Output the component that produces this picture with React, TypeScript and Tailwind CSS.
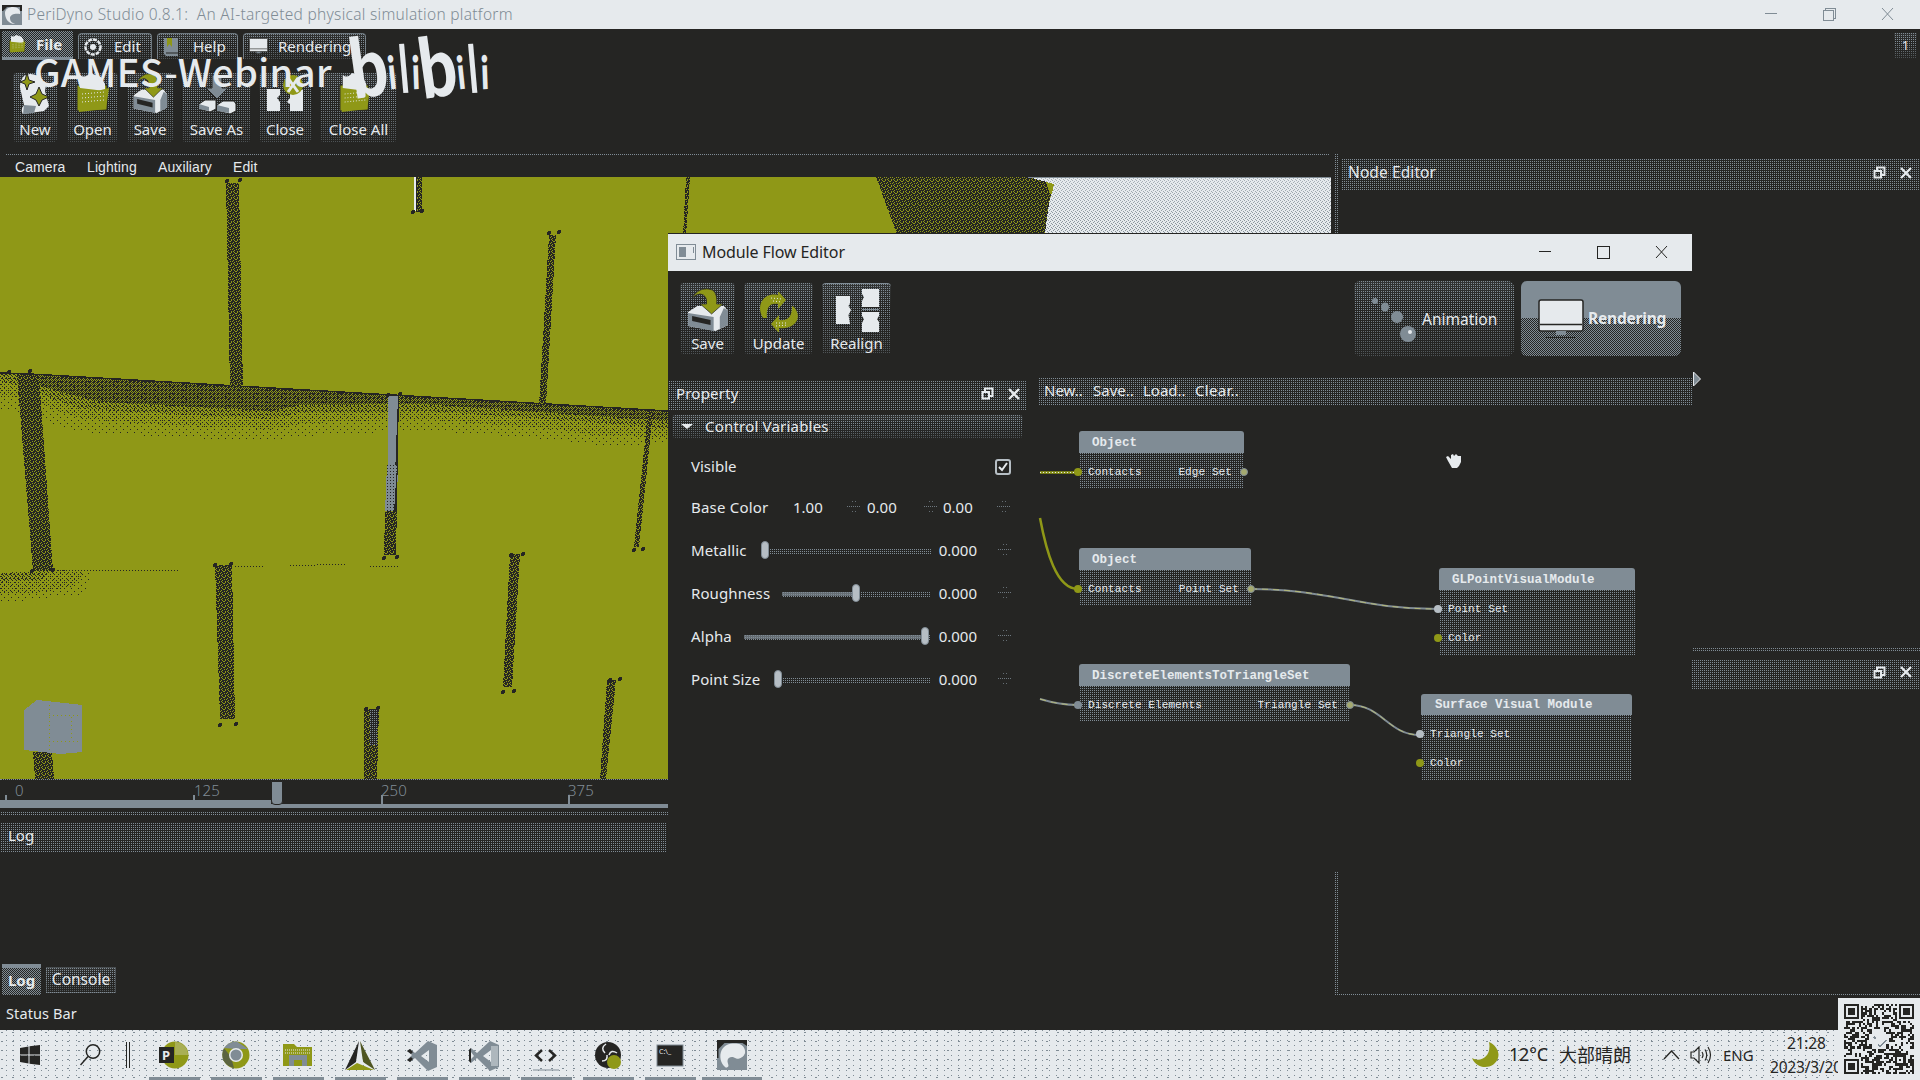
import React from "react";

const DK = "#252523";
const OL = "#8f9817";
const GR = "#808c95";
const WH = "#e6eaed";

const DOTS = "[background:conic-gradient(#808c95_25%,transparent_0)_0_0/2px_2px]";
const CHECKER = "[background:conic-gradient(#808c95_25%,transparent_0_50%,#808c95_0_75%,transparent_0)_0_0/2px_2px]";
const FADE = "[background:linear-gradient(#808c9526,#25252300_35%,#25252390),conic-gradient(#808c95_25%,transparent_0)_0_0/2px_2px]";
const SPECK = "[background:conic-gradient(at_6px_1px,#808c95_25%,transparent_0)_0_0/7px_5px,conic-gradient(at_9px_1px,#808c95_25%,transparent_0)_3px_2px/11px_9px]";

function PeriLogo({ w, h, flip }: { w: number; h: number; flip?: boolean }) {
  return (
    <svg width={w} height={h} viewBox="0 0 20 20" preserveAspectRatio="none">
      <rect width="20" height="20" fill={GR} />
      <path d={flip ? "M0 0H20V4L17 2H5L1 6V12H0Z" : "M0 0H20V6H18V2H5L1 6H0Z"} fill={DK} />
      <path d={flip ? "M6 18.500C2 16 1.500 10 3 7C5 3 9 2 14 2.500C18 3 19.500 7 18.500 10C17 13 13 13 11 11.500C9 11 7 12 7 14C7 16 9 18 6 18.500Z" : "M3 8C3 4 7 2 11 2C16 2 19 5 18 9C14 8 8 9 8 13C8 17 11 18 13 19C6 19 3 13 3 8Z"} fill={WH} />
      {flip && <path d="M8 15C9 12 12 14 15 12.500C18 11 19 9 19 7V19H9Z" fill={GR} />}
    </svg>
  );
}

function Paper() {
  return (
    <svg width="34" height="42" viewBox="0 0 34 42">
      <path d="M6 3Q12-1 20 3L28 12L27 18L31 33L26 38L5 41Q2 37 6 32L3 19Q0 10 6 3Z" fill={WH} />
      <path d="M6 32L18 33L16 40L5 41Z" fill={GR} />
      <path d="M9 0L11 7L17 9L11 11L9 17L7 11L2 9L7 7ZM21 14L24 21L31 24L24 27L21 33L18 27L12 24L18 21Z" fill={OL} stroke={DK} />
    </svg>
  );
}
function Folder({ w = 34, h = 40 }: { w?: number; h?: number }) {
  return (
    <svg width={w} height={h} viewBox="0 0 34 40" preserveAspectRatio="none">
      <path d="M1 38V12H8L11 8H22L24 12H31V37Z" fill={OL} stroke={DK} />
      <path d="M4 15V2Q9 6 14 0L25 4L29 11V18Z" fill={WH} />
      <path d="M3 17L13 20L33 15L30 36L3 39Z" fill={OL} />
      <path d="M6 21L29 19M6 25L29 23M6 29L28 27" fill="none" stroke={WH} strokeDasharray="1 2" />
    </svg>
  );
}
function Disk({ w = 38, h = 44 }: { w?: number; h?: number }) {
  return (
    <svg width={w} height={h} viewBox="0 0 42 44" preserveAspectRatio="none">
      <path d="M2 24L11 18H37L41 23V37L29 43L2 38Z" fill={WH} />
      <path d="M2 25L27 29V43L2 38ZM37 20L41 23V37L33 41V29Z" fill={GR} />
      <path d="M6 28L24 32V37L6 33Z" fill={DK} />
      <path d="M8 7Q15-2 26 2Q31 6 30 16H36L25 26L14 16H20Q21 7 14 6Q10 6 6 10Z" fill={OL} stroke={DK} strokeWidth=".7" />
    </svg>
  );
}
function SaveAs() {
  return (
    <svg width="38" height="42" viewBox="0 0 38 42">
      <path d="M14 2H24V15H30L19 26L8 15H14Z" fill={GR} stroke={DK} />
      <path d="M1 31L7 27H18V36L12 39L1 36ZM19 32L25 28H36L38 31V38L32 41L19 38Z" fill={WH} stroke={DK} />
      <path d="M1 31L11 34V38L1 36ZM19 32L31 35V40L19 38Z" fill={GR} />
    </svg>
  );
}
function Puzzle({ x }: { x?: boolean }) {
  return x ? (
    <svg width="38" height="40" viewBox="0 0 38 40">
      <path d="M1 16H14V22L11 25L14 29V38H1ZM24 17H37V38H24V31L21 29L24 25Z" fill={WH} />
      <circle cx="27" cy="12" r="10" fill={OL} />
      <path d="M22 5L32 19M32 5L22 19" stroke={WH} strokeWidth="3" />
    </svg>
  ) : (
    <svg width="46" height="44" viewBox="0 0 46 44">
      <path d="M2 8H16V15L14.500 18L17 22L14.500 27L16 36H2Z" fill={WH} />
      <path d="M28 1H45V19H28V13L30 9L28 6ZM28 24H45V28L43 31L45 34V44H28V35L30 31L28 28Z" fill={WH} />
      <path d="M28 21.500H45" stroke={GR} />
    </svg>
  );
}
function Refresh() {
  return (
    <svg width="42" height="40" viewBox="0 0 42 40">
      <path d="M5 26C-3 13 6 0 20 3V-1L28 8L20 17V12C11 10 8 17 9 26Z" fill={OL} />
      <path d="M36 15C46 27 35 38 21 36V41L13 32L21 23V28C31 29 34 24 34 14Z" fill={OL} />
      <path d="M13 6L24 7M15 9L24 10M18 31L28 31M18 34L30 33" stroke={WH} strokeDasharray="1 2" strokeWidth="1" />
    </svg>
  );
}
function Monitor({ w, h }: { w: number; h: number }) {
  return (
    <svg width={w} height={h} viewBox="0 0 46 40" preserveAspectRatio="none">
      <rect x="1" y="1" width="44" height="31" rx="2" fill={WH} stroke={DK} strokeWidth="1.5" />
      <path d="M2 25.5H44" stroke={DK} strokeWidth="1.5" />
      <path d="M18 32H28V36H18Z" fill={GR} />
      <path d="M8 38.5H38" stroke={DK} />
    </svg>
  );
}
function Restore() {
  return (
    <svg width="13" height="13" viewBox="0 0 13 13" fill="none" stroke={WH} strokeWidth="2">
      <path d="M4 4V1.5H11.5V9H9" />
      <rect x="1.5" y="5" width="6.5" height="6.5" />
    </svg>
  );
}
function Cross() {
  return (
    <svg width="12" height="12" viewBox="0 0 12 12" stroke={WH} strokeWidth="2.3">
      <path d="M1 1L11 11M11 1L1 11" />
    </svg>
  );
}

function Tab({ icon, label, cls }: { icon: React.ReactNode; label: string; cls: string }) {
  return (
    <div className={`flex h-[26px] shrink-0 items-center overflow-visible rounded-t-sm border border-b-0 border-[#808c95]/80 ${FADE} ${cls}`}>
      {icon}
      <span className="pb-px leading-[20px]">{label}</span>
    </div>
  );
}
function Tool({ icon, label, cls }: { icon: React.ReactNode; label: string; cls: string }) {
  return (
    <div className={`flex shrink-0 flex-col items-center justify-between rounded-sm ${FADE} ${cls}`}>
      {icon}
      <span className="whitespace-nowrap leading-[22px]">{label}</span>
    </div>
  );
}

function Post({ p, light }: { p: string; light?: boolean }) {
  return <polygon points={p} fill={light ? "url(#pl)" : "url(#pd)"} />;
}
function Feet({ x, y, gap = 13 }: { x: number; y: number; gap?: number }) {
  return (
    <g fill={DK}>
      <circle cx={x} cy={y} r="2" />
      <circle cx={x + gap} cy={y - 1} r="2" />
    </g>
  );
}

function Scene() {
  return (
    <svg width="1331" height="602" viewBox="0 177 1331 602" className="block shrink-0" shapeRendering="crispEdges">
      <defs>
        <pattern id="pd" width="6" height="6" patternUnits="userSpaceOnUse">
          <rect width="6" height="6" fill={DK} />
          <path d="M0 0h1v1h-1zM3 0h1v1h-1zM1 1h1v1h-1zM5 2h1v1h-1zM2 3h1v1h-1zM4 3h1v1h-1zM0 4h1v1h-1zM3 5h1v1h-1zM5 5h1v1h-1zM2 1h1v1h-1z" fill={OL} />
        </pattern>
        <pattern id="pl" width="3" height="3" patternUnits="userSpaceOnUse">
          <rect width="3" height="3" fill={GR} />
          <rect width="1" height="1" fill={DK} />
        </pattern>
        <pattern id="pm" width="2" height="2" patternUnits="userSpaceOnUse">
          <rect width="2" height="2" fill={DK} />
          <rect width="1" height="1" fill={GR} />
        </pattern>
        <linearGradient id="skyfade" x1="0" y1="0" x2="0" y2="1">
          <stop offset="0" stopColor={WH} stopOpacity=".4" />
          <stop offset="1" stopColor={WH} stopOpacity="0" />
        </linearGradient>
        <pattern id="sky" width="4" height="4" patternUnits="userSpaceOnUse">
          <rect width="4" height="4" fill={WH} />
          <path d="M0 0h1v1h-1zM2 1h1v1h-1zM1 2h1v1h-1zM3 3h1v1h-1z" fill={GR} />
        </pattern>
        <pattern id="d1" width="2" height="2" patternUnits="userSpaceOnUse">
          <rect width="1" height="1" fill={DK} />
          <rect x="1" y="1" width="1" height="1" fill={DK} />
        </pattern>
        <pattern id="d2" width="4" height="4" patternUnits="userSpaceOnUse">
          <path d="M0 0h1v1h-1zM2 1h1v1h-1zM1 2h1v1h-1zM3 3h1v1h-1z" fill={DK} />
        </pattern>
        <pattern id="d3" width="4" height="4" patternUnits="userSpaceOnUse">
          <rect width="1" height="1" fill={DK} />
          <rect x="2" y="2" width="1" height="1" fill={DK} />
        </pattern>
        <pattern id="d4" width="7" height="6" patternUnits="userSpaceOnUse">
          <path d="M1 0h1v1h-1zM4 3h1v1h-1z" fill={DK} />
        </pattern>
      </defs>
      <rect x="0" y="177" width="1331" height="602" fill={OL} />
      <polygon points="876,177 1030,177 1054,184 1050,205 1044,240 899,240" fill="url(#pd)" />
      <polygon points="1028,177 1331,177 1331,240 1044,240 1049,203 1054,184" fill="url(#sky)" />
      <polygon points="1028,177 1331,177 1331,240 1044,240 1049,203 1054,184" fill="url(#skyfade)" />
      <polygon points="1046,182 1054,184 1052,194 1050,194" fill={OL} />
      <path d="M1028 177.5H1331" stroke={GR} />
      <path d="M0 372L668 411V444L600 446L560 440L420 430L310 436L270 440L180 438L80 432L42 420L10 410L0 410Z" fill="url(#d4)" />
      <path d="M0 372L668 411V437L600 436L560 430L420 419L310 423L270 429L180 426L80 419L30 400L0 396Z" fill="url(#d3)" />
      <path d="M0 372L668 411V429L580 421L420 411L300 413L270 419L150 413L80 409L30 390L0 381Z" fill="url(#d2)" />
      <path d="M15 373L668 411V421L420 404L300 405L270 411L100 402L60 392L30 382Z" fill="url(#d1)" />
      <path d="M0 373L30 374L668 411" stroke={DK} strokeWidth="1.5" fill="none" />
      <path d="M0 573L60 570L92 572L85 594L30 600L0 602Z" fill="url(#d4)" />
      <path d="M0 573L60 570L85 573L70 588L30 594L0 594Z" fill="url(#d3)" />
      <path d="M0 573L50 571L40 580L0 582Z" fill="url(#d2)" />
      <path d="M60 570H180M235 566H265M290 566L345 564M370 566H400" stroke={DK} strokeDasharray="1 2" />
      <Post p="226,183 239,183 243,388 230,388" />
      <rect x="414" y="177" width="2" height="34" fill={WH} />
      <rect x="416" y="177" width="6" height="35" fill="url(#pd)" />
      <path d="M416.500 177V212" stroke={DK} />
      <Post p="549,235 556,235 546,406 539,406" />
      <Post p="17,375 39,375 53,571 33,571" />
      <rect x="388" y="396" width="10" height="86" fill={GR} />
      <polygon points="398,396 399,396 396,555 392,555" fill={DK} />
      <Post light p="387,465 397,465 394,512 385,512" />
      <Post p="385,511 397,511 395,555 384,555" />
      <Post p="648,412 653,412 639,547 634,547" />
      <Post p="215,565 232,565 235,719 220,719" />
      <Post p="510,554 520,554 512,687 503,687" />
      <Post p="364,709 379,709 377,779 364,779" />
      <polygon fill="url(#pm)" points="370,709 378,709 377,745 370,745" />
      <Post p="607,680 616,680 606,779 600,779" />
      <Post p="33,752 52,752 54,779 35,779" />
      <Post p="686,177 690,177 686,236 683,236" />
      <Feet x={227} y={181} />
      <Feet x={549} y={233} gap={10} />
      <Feet x={9} y={372} gap={21} />
      <Feet x={32} y={571} gap={21} />
      <Feet x={388} y={395} gap={12} />
      <Feet x={384} y={558} />
      <Feet x={634} y={550} gap={9} />
      <Feet x={215} y={565} gap={16} />
      <Feet x={220} y={725} gap={16} />
      <Feet x={511} y={555} gap={12} />
      <Feet x={503} y={692} gap={11} />
      <Feet x={366} y={709} gap={12} />
      <Feet x={610} y={680} gap={10} />
      <Feet x={413} y={212} gap={9} />
      <polygon points="24,710 37,700 82,705 82,752 60,754 24,750" fill={GR} />
      <path d="M49 705V752M49 715H80M49 741H80M71 717V740" stroke={OL} strokeDasharray="1 3" fill="none" />
    </svg>
  );
}

function Timeline() {
  const marks = [
    { x: 5, t: "0", tx: 15 },
    { x: 193, t: "125", tx: 194 },
    { x: 381, t: "250", tx: 381 },
    { x: 568, t: "375", tx: 568 },
  ];
  return (
    <div className="relative h-[29px] w-[668px] shrink-0 border-t border-dotted border-[#808c95]">
      {marks.map((m) => (
        <React.Fragment key={m.t}>
          <span className="absolute top-[-1px] text-[15px] font-light leading-[22px] text-[#808c95]" style={{ left: m.tx }}>{m.t}</span>
          <span className="absolute top-[15px] h-[12px] w-[2px] bg-[#808c95]" style={{ left: m.x }} />
        </React.Fragment>
      ))}
      <div className="absolute bottom-0 left-0 h-[4px] w-[668px] bg-[#808c95]" />
      <div className="absolute bottom-0 left-0 h-[8px] w-[271px] bg-[#808c95]" />
      <div className="absolute left-[271px] top-px h-[24px] w-[12px] rounded-b border border-[#252523] bg-[#808c95]" />
    </div>
  );
}

function Spin() {
  return (
    <svg width="14" height="13" viewBox="0 0 14 13" shapeRendering="crispEdges" className="relative bottom-px">
      <path d="M0 6.5H14" stroke={GR} strokeDasharray="1 1" opacity=".8" />
      <path d="M5 1.500H9M5 11.500H9" stroke={GR} strokeDasharray="1 2" opacity=".7" />
    </svg>
  );
}

function SliderRow({ label, left, handle, filled }: { label: string; left: number; handle: number; filled?: boolean }) {
  return (
    <div className="relative flex h-[43px] w-[359px] items-center">
      <span className="ml-[23px] pb-px tracking-[0.1px]">{label}</span>
      <span className={`absolute top-[20px] h-[5px] ${DOTS}`} style={{ left: left - 668, width: 931 - left }} />
      {filled && <span className="absolute top-[20px] h-[4px] bg-[#808c95]/70" style={{ left: left - 668, width: handle - left }} />}
      <span className="absolute top-[12px] h-[18px] w-[8px] rounded-sm border border-[#808c95] bg-[#b6bec4]" style={{ left: handle - 668 }} />
      <span className="ml-auto mr-[21px] pb-px">0.000</span>
      <span className="mr-[15px]"><Spin /></span>
    </div>
  );
}

type Row = { l?: string; lp?: string; r?: string };
function Node({ x, y, w, title, head, rows, pad, tp }: { x: number; y: number; w: number; title: string; head: number; rows: Row[]; pad: number; tp: number }) {
  return (
    <div className="absolute" style={{ left: x - 1038, top: y - 405, width: w }}>
      <div className="rounded-t-[3px] bg-[#808c95] text-[12.5px] font-bold" style={{ height: head, paddingLeft: tp, lineHeight: `${head + 2}px` }}>{title}</div>
      <div className={`pt-[5px] ${DOTS} ${rows.length > 1 ? "pb-[2px]" : "pb-[1px]"}`}>
        {rows.map((r, i) => (
          <div key={i} className="relative flex h-[29px] items-center justify-between text-[11px] tracking-[0.1px]" style={{ paddingLeft: pad, paddingRight: 12 }}>
            {r.l && <span className="absolute left-[-5px] top-[10px] size-[8px] rounded-full" style={{ background: r.lp }} />}
            <span>{r.l}</span>
            {r.r && <span>{r.r}</span>}
            {r.r && <span className="absolute right-[-4px] top-[10px] size-[8px] rounded-full border border-[#808c95] bg-[#a5aa70]" />}
          </div>
        ))}
      </div>
    </div>
  );
}

function Dialog() {
  return (
    <div className="absolute left-[668px] top-[233px] flex h-[639px] w-[1024px] flex-col border-t border-[#252523] bg-[#252523]">
      <div className="flex h-[37px] shrink-0 items-center bg-[#e6eaed] text-[#252523]">
        <svg width="20" height="16" viewBox="0 0 20 16" className="mb-[2px] ml-[8px]"><rect x=".5" y=".5" width="19" height="15" fill={WH} stroke={GR} /><path d="M3 3H10V13H3ZM17 3H18V9H17Z" fill={GR} /></svg>
        <span className="ml-[6px] pb-px text-[16px] tracking-[-0.1px]">Module Flow Editor</span>
        <svg width="130" height="14" viewBox="0 0 130 14" className="mb-[2px] ml-auto mr-[24px]" fill="none" stroke={DK} shapeRendering="crispEdges">
          <path d="M1 6.5H13M59.500 1.500H71V13H59.500Z" /><path d="M118 1L129 13M129 1L118 13" shapeRendering="auto" />
        </svg>
      </div>
      <div className="flex h-[107px] shrink-0 items-start pl-[12px] pt-[12px] text-[15px]">
        <Tool icon={<Disk w={43} h={44} />} label="Save" cls="mr-[9px] h-[71px] w-[55px] pt-[5px]" />
        <Tool icon={<span className="pt-[5px]"><Refresh /></span>} label="Update" cls="mr-[9px] h-[71px] w-[69px] pt-[4px]" />
        <Tool icon={<Puzzle />} label="Realign" cls="h-[71px] w-[69px] border-t border-[#808c95] pt-[4px]" />
        <div className={`ml-auto mr-[7px] mt-[-2px] flex h-[75px] w-[160px] items-center rounded-md pl-[16px] ${FADE}`}>
          <svg width="46" height="46" viewBox="0 0 46 46" fill={GR}><ellipse cx="5" cy="5" rx="3" ry="3" /><ellipse cx="15" cy="11" rx="4" ry="4.500" /><ellipse cx="27" cy="21" rx="6" ry="6" /><ellipse cx="38" cy="38" rx="8" ry="8" /><circle cx="40" cy="36" r="2" fill={WH} /></svg>
          <span className="ml-[6px] pt-[2px] text-[15.5px]">Animation</span>
        </div>
        <div className="mr-[11px] mt-[-2px] flex h-[75px] w-[160px] items-center rounded-md pl-[17px] [background:linear-gradient(#808c95_50%,transparent_0),conic-gradient(#808c95_25%,transparent_0_50%,#808c95_0_75%,transparent_0)_0_0/2px_2px]">
          <Monitor w={46} h={40} />
          <span className="ml-[4px] text-[15.5px] font-bold tracking-[-0.2px]">Rendering</span>
        </div>
      </div>
      <div className="flex grow">
        <div className="w-[359px] shrink-0 pt-[3px] text-[15px]">
          <div className={`flex h-[30px] items-center pb-[5px] ${DOTS}`}>
            <span className="ml-[8px] grow tracking-[0.2px]">Property</span>
            <span className="mr-[14px]"><Restore /></span>
            <span className="mr-[7px]"><Cross /></span>
          </div>
          <div className={`ml-[4px] mt-[4px] flex h-[23px] w-[351px] items-center rounded-sm ${FADE}`}>
            <span className="ml-[9px] border-x-[6px] border-t-[5px] border-x-transparent border-t-[#e6eaed]" />
            <span className="ml-[12px] tracking-[0.2px]">Control Variables</span>
          </div>
          <div className="mt-[8px] flex h-[41px] items-center">
            <span className="ml-[23px] grow">Visible</span>
            <svg width="16" height="16" viewBox="0 0 16 16" className="mr-[16px]" fill="none"><rect x="1" y="1" width="14" height="14" rx="2" stroke="#b6bec4" strokeWidth="2" /><path d="M4 8L7 11L12 4" stroke={WH} strokeWidth="2" /></svg>
          </div>
          <div className="flex h-[42px] items-center pb-[2px]">
            <span className="ml-[23px] w-[102px] tracking-[0.2px]">Base Color</span>
            <span className="w-[54px]">1.00</span><span className="w-[20px]"><Spin /></span>
            <span className="w-[57px]">0.00</span><span className="w-[19px]"><Spin /></span>
            <span className="w-[54px]">0.00</span><Spin />
          </div>
          <SliderRow label="Metallic" left={765} handle={761} />
          <SliderRow label="Roughness" left={782} handle={852} filled />
          <SliderRow label="Alpha" left={744} handle={921} filled />
          <SliderRow label="Point Size" left={778} handle={774} />
        </div>
        <div className="ml-[11px] flex grow flex-col">
          <div className={`flex h-[27px] items-center pb-[2px] pl-[6px] text-[15px] ${DOTS}`}>
            <span className="w-[49px]">New..</span><span className="w-[50px]">Save..</span><span className="w-[52px]">Load..</span><span className="tracking-[0.3px]">Clear..</span>
          </div>
          <div className="relative grow overflow-hidden font-['Liberation_Mono',monospace]">
            <svg width="654" height="460" viewBox="1038 405 654 460" className="block" fill="none" strokeWidth="2">
              <path d="M1040 472.500H1078M1040 518C1046 550 1056 589 1078 589" stroke={OL} strokeWidth="2.500" />
              <path d="M1040 472.500H1078" stroke={WH} strokeWidth="1" strokeDasharray="1 2" />
              <path d="M1251 589C1330 589 1360 609 1438 609M1040 699Q1060 705 1078 705M1350 705C1382 705 1388 735 1420 735" stroke={GR} />
              <path d="M1251 589C1330 589 1360 609 1438 609M1040 699Q1060 705 1078 705M1350 705C1382 705 1388 735 1420 735" stroke="#b5b978" strokeWidth="1" strokeDasharray="6 5" />
              <path d="M1448 461L1446 457L1448 456L1451 459L1451 455L1453 454L1454 456L1456 454L1458 456L1461 456L1461 462L1459 466L1457 468H1452Z" fill={WH} stroke="none" />
            </svg>
            <Node x={1079} y={431} w={165} title="Object" head={22} tp={13} pad={9} rows={[{ l: "Contacts", lp: OL, r: "Edge Set" }]} />
            <Node x={1079} y={548} w={172} title="Object" head={22} tp={13} pad={9} rows={[{ l: "Contacts", lp: OL, r: "Point Set" }]} />
            <Node x={1079} y={664} w={271} title="DiscreteElementsToTriangleSet" head={22} tp={13} pad={9} rows={[{ l: "Discrete Elements", lp: GR, r: "Triangle Set" }]} />
            <Node x={1439} y={568} w={196} title="GLPointVisualModule" head={22} tp={13} pad={9} rows={[{ l: "Point Set", lp: "#b6bec4" }, { l: "Color", lp: OL }]} />
            <Node x={1421} y={694} w={211} title="Surface Visual Module" head={21} tp={14} pad={9} rows={[{ l: "Triangle Set", lp: "#b6bec4" }, { l: "Color", lp: OL }]} />
          </div>
        </div>
      </div>
    </div>
  );
}

const QN = 33;
function qrCell(r: number, c: number): boolean {
  const finder = (a: number, b: number) => {
    const d = Math.max(Math.abs(a - 3), Math.abs(b - 3));
    return d > 4 ? null : d === 3 || d < 2;
  };
  for (const [a, b] of [[r, c], [r, QN - 1 - c], [QN - 1 - r, c]]) {
    const f = finder(a, b);
    if (f !== null) return f;
  }
  if (Math.hypot(r - 16, c - 16) < 5) return false;
  const al = Math.max(Math.abs(r - 26), Math.abs(c - 26));
  if (al <= 2) return al !== 1;
  const h = Math.sin(r * 127.1 + c * 311.7) * 43758.5453;
  return h - Math.floor(h) > 0.48;
}
function QR() {
  const cells: string[] = [];
  for (let r = 0; r < QN; r++) for (let c = 0; c < QN; c++) if (qrCell(r, c)) cells.push(`M${c} ${r}h1v1h-1z`);
  return (
    <div className="absolute bottom-0 right-0 flex h-[82px] w-[82px] items-center justify-center bg-[#e6eaed]">
      <svg width="70" height="70" viewBox="0 0 33 33" shapeRendering="crispEdges">
        <path d={cells.join("")} fill={DK} />
        <path d="M14 15.500L15 16.500M16 19L17 20L20 17" stroke={GR} strokeWidth=".8" fill="none" />
      </svg>
    </div>
  );
}

const APPS: React.ReactNode[] = [
  <g key="p"><circle cx="16" cy="14" r="13.500" fill={OL} /><rect x="0" y="6" width="15" height="16" fill={DK} /><path d="M16 1A13 13 0 0 1 29 14H16Z" fill="#a9af55" /><text x="3" y="19" fontSize="13" fontWeight="700" fill={WH}>P</text></g>,
  <g key="c"><circle cx="15" cy="14" r="13.500" fill={OL} /><path d="M3 7A13.500 13.500 0 0 0 13 27L10 16Z" fill="#5b6440" /><path d="M3 7Q8 0 16 0.500L27 8H15Z" fill={GR} /><circle cx="15" cy="14" r="7" fill={WH} /><circle cx="15" cy="14" r="5.500" fill={GR} /></g>,
  <g key="f"><path d="M0 3H11L14 6H29V25H0Z" fill={OL} /><path d="M2 9H28M2 12H28" stroke={WH} strokeDasharray="1 1" /><path d="M6 25V14H24V25H19V19H11V25Z" fill={GR} /></g>,
  <g key="a"><path d="M14 0L0 29L11 21Z" fill={DK} /><path d="M15 0L30 29L18 21Z" fill="#4f5521" /><path d="M1 29L12 22L29 29Z" fill={OL} /><path d="M14 10L11 21L19 23Z" fill={WH} /></g>,
  <g key="v" fill={GR}><path d="M21 0L30 4V26L21 30L8 17L3 21L0 19L5 14L0 10L3 8L8 12ZM22 9L14 15L22 21Z" fillRule="evenodd" /><path d="M0 10L3 8L6 11L4 13ZM0 19L3 21L6 18L4 16Z" fill={DK} /></g>,
  <g key="w" fill={GR}><path d="M21 0L30 4V26L21 30L8 17L2 22L0 20V9L2 7L8 12ZM22 9L14 15L22 21ZM2 11V18L5 15Z" fillRule="evenodd" /><path d="M0 9L2 7V22L0 20Z" fill={DK} /><path d="M22 5L29 5V25L22 25Z" fill={WH} opacity=".45" /></g>,
  <g key="d" fill="none" stroke={DK} strokeWidth="2.500"><path d="M11 9L5 14.500L11 20M18 9L24 14.500L18 20" /><path d="M2 29H28" stroke={GR} strokeWidth="1" /></g>,
  <g key="o"><circle cx="15" cy="14" r="13" fill={DK} /><path d="M13 3Q7 7 12 12M24 12Q18 8 16 14M9 20Q15 20 14 14" stroke={WH} strokeWidth="1.500" fill="none" /><ellipse cx="21" cy="21" rx="7" ry="7" fill={OL} /></g>,
  <g key="t"><rect x="2" y="4" width="26" height="21" fill={DK} stroke={GR} /><text x="4" y="13" fontSize="7" fill={WH}>C:\_</text></g>,
];

function Taskbar() {
  return (
    <div className="flex h-[50px] shrink-0 items-stretch bg-[#e6eaed] text-[#252523]">
      <div className={`flex h-full w-[1838px] shrink-0 items-stretch ${SPECK}`}>
        <div className="flex w-[149px] shrink-0 items-center">
          <svg width="20" height="20" viewBox="0 0 20 20" className="ml-[20px]" fill={DK}><path d="M0 3L8.500 1.500V9.500H0ZM9.500 1.300L20 0V9.500H9.500ZM0 10.500H8.500V18.500L0 17ZM9.500 10.500H20V20L9.500 18.700Z" /></svg>
          <svg width="21" height="22" viewBox="0 0 21 22" className="ml-[40px]" fill="none" stroke={DK} strokeWidth="1.500"><circle cx="13" cy="7.500" r="6.700" /><path d="M8 12.500L.5 21" /></svg>
          <span className="ml-[25px] h-[26px] w-[4px] border-x border-[#252523]" />
        </div>
        {APPS.map((a, i) => (
          <div key={i} className="flex w-[62px] shrink-0 flex-col justify-between pt-[11px]">
            <svg width="31" height="30" viewBox="0 0 31 30" className="ml-[10px]">{a}</svg>
            <span className="h-[3px] w-[51px] bg-[#808c95]" />
          </div>
        ))}
        <div className="ml-[-5px] flex w-[60px] flex-col items-center justify-between pt-[10px]">
          <PeriLogo w={30} h={30} flip />
          <span className="h-[3px] w-full bg-[#808c95]" />
        </div>
        <div className="ml-auto flex items-center">
          <svg width="27" height="26" viewBox="0 0 27 26"><path d="M17 0C24 3 28 10 26 16C23 27 5 29 0 16C8 21 20 15 17 0Z" fill={OL} /></svg>
          <span className="ml-[10px] w-[50px] whitespace-nowrap pb-[2px] text-[18px] tracking-[-0.2px]">12°C</span>
          <span className="w-[104px] whitespace-nowrap pb-[2px] font-['Noto_Sans_CJK_SC',sans-serif] text-[18px]">大部晴朗</span>
          <svg width="17" height="10" viewBox="0 0 17 10" fill="none" stroke={DK} strokeWidth="1.300"><path d="M1 9L8.500 1L16 9" /></svg>
          <svg width="22" height="18" viewBox="0 0 22 18" className="ml-[10px]" fill="none" stroke={DK} strokeWidth="1.200"><path d="M1 6H4L9 1V17L4 12H1ZM12 6Q14 9 12 12M15 3.500Q18.500 9 15 14.500M18 1Q23 9 18 17" /></svg>
          <span className="ml-[11px] w-[43px] text-[15px]">ENG</span>
          <div className="flex w-[72px] flex-col whitespace-nowrap pb-px text-[15.5px] leading-[24px] tracking-[-0.2px]">
            <span className="pl-[21px]">21:28</span>
            <span className="pl-[4px]">2023/3/20</span>
          </div>
        </div>
      </div>
    </div>
  );
}

function DockIcons() {
  return (
    <div className="ml-auto flex items-center gap-[14px] pr-[8px]"><Restore /><Cross /></div>
  );
}

export default function App() {
  return (
    <div className="relative flex h-[1080px] w-[1920px] flex-col overflow-hidden bg-[#252523] font-['Noto_Sans',sans-serif] text-[15px] text-[#e6eaed]">
      <div className="flex h-[29px] shrink-0 items-center bg-[#e6eaed] pl-[2px] text-[#808c95]">
        <PeriLogo w={20} h={20} />
        <span className="ml-[5px] whitespace-pre text-[15.5px] font-light tracking-[0.28px]">PeriDyno Studio 0.8.1:  An AI-targeted physical simulation platform</span>
        <svg width="130" height="14" viewBox="0 0 130 14" className="mb-[2px] ml-auto mr-[26px]" fill="none" stroke={GR} shapeRendering="crispEdges">
          <path d="M1 6.500H13M59.500 3.500H69V13H59.500ZM61.500 3V1.500H71V11H69" /><path d="M118 1L129 13M129 1L118 13" shapeRendering="auto" />
        </svg>
      </div>
      <div className="flex h-[125px] shrink-0 flex-col">
        <div className="flex h-[44px] items-start pl-[2px] pt-[2px]">
          <div className={`mr-[5px] flex h-[29px] w-[71px] items-center border-b-[3px] border-[#808c95] font-bold ${CHECKER}`}>
            <span className="ml-[7px]"><Folder w={17} h={18} /></span><span className="ml-[10px] leading-[20px]">File</span>
          </div>
          <Tab cls="mr-[5px] mt-[2px] w-[74px]" label="Edit" icon={<svg width="18" height="18" viewBox="0 0 18 18" className="ml-[5px] mr-[12px]"><circle cx="9" cy="9" r="7.500" fill="none" stroke={WH} strokeWidth="2.500" strokeDasharray="4 1" /><circle cx="9" cy="9" r="3" fill={WH} /></svg>} />
          <Tab cls="mr-[5px] mt-[2px] w-[81px]" label="Help" icon={<svg width="15" height="18" viewBox="0 0 15 18" className="ml-[6px] mr-[14px]"><path d="M0 0H14V18H2L0 16Z" fill={GR} /><path d="M3 0H8V9L5.500 6L3 9Z" fill={OL} /><path d="M2 15H14" stroke={DK} /></svg>} />
          <Tab cls="mt-[2px] w-[123px]" label="Rendering" icon={<span className="ml-[5px] mr-[10px]"><Monitor w={19} h={17} /></span>} />
          <div className={`ml-auto mr-[3px] mt-[2px] flex h-[25px] w-[23px] items-center justify-center text-[13px] ${FADE}`}>1</div>
        </div>
        <div className="flex items-start pl-[13px]">
          <Tool cls="mr-[10px] h-[69px] w-[44px] pb-[2px]" label="New" icon={<Paper />} />
          <Tool cls="mr-[9px] h-[69px] w-[51px] pb-[2px]" label="Open" icon={<Folder />} />
          <Tool cls="mr-[9px] h-[69px] w-[46px] pb-[2px]" label="Save" icon={<Disk w={36} h={41} />} />
          <Tool cls="mr-[8px] h-[69px] w-[69px] pb-[2px]" label="Save As" icon={<SaveAs />} />
          <Tool cls="mr-[9px] h-[69px] w-[52px] pb-[2px]" label="Close" icon={<Puzzle x />} />
          <Tool cls="h-[69px] w-[77px] pb-[2px]" label="Close All" icon={<span className="mr-[8px]"><Folder w={32} /></span>} />
        </div>
      </div>
      <div className="flex h-[844px] shrink-0">
        <div className="flex w-[1334px] shrink-0 flex-col">
          <div className="ml-[5px] mr-[5px] h-[2px] shrink-0 [background:conic-gradient(#808c95_25%,transparent_0)_0_0/2px_2px]" />
          <div className="flex h-[21px] shrink-0 items-center pl-[15px] font-['Liberation_Sans',sans-serif] text-[14px] leading-none tracking-[0.1px]">
            <span className="w-[72px]">Camera</span><span className="w-[71px]">Lighting</span><span className="w-[75px]">Auxiliary</span><span>Edit</span>
          </div>
          <Scene />
          <Timeline />
          <div className={`mt-[4px] h-[4px] w-[668px] shrink-0 ${DOTS}`} />
          <div className={`mt-[7px] flex h-[29px] w-[667px] shrink-0 items-center pb-[4px] pl-[8px] ${DOTS}`}>Log</div>
          <div className="mt-auto flex h-[34px] items-start pl-[2px]">
            <div className={`mr-[5px] flex h-[31px] w-[39px] items-center justify-center border-t-4 border-[#808c95] pb-[2px] font-bold ${CHECKER}`}>Log</div>
            <div className={`mt-[3px] flex h-[26px] w-[70px] items-center justify-center border border-[#808c95]/40 text-[15.5px] ${FADE}`}>Console</div>
          </div>
        </div>
        <div className="flex w-[4px] shrink-0 flex-col justify-end">
          <div className={`grow ${DOTS}`} />
          <div className="h-[3px] shrink-0" />
        </div>
        <div className="flex grow flex-col pb-[2px]">
          <div className={`ml-[3px] mt-[5px] flex h-[31px] items-center pb-[4px] pl-[7px] text-[15.5px] tracking-[0.1px] ${DOTS}`}>Node Editor<DockIcons /></div>
          <div className="grow" />
          <div className={`h-[4px] ${DOTS}`} />
          <div className={`ml-[3px] mt-[8px] flex h-[30px] items-center pb-[6px] ${DOTS}`}><DockIcons /></div>
          <div className="h-[304px] shrink-0" />
          <div className={`h-[2px] shrink-0 ${DOTS}`} />
        </div>
      </div>
      <div className="flex h-[32px] shrink-0 items-center pl-[6px] text-[14.5px] tracking-[0.1px]">Status Bar</div>
      <Taskbar />
      <Dialog />
      <svg width="9" height="16" viewBox="0 0 9 16" className="absolute left-[1693px] top-[371px]"><path d="M.5 1L7.500 8L.5 15Z" fill={GR} stroke={WH} /></svg>
      <QR />
      <div className="absolute left-[34px] top-[44px] whitespace-nowrap font-['Noto_Sans_CJK_SC',sans-serif] text-[38px] font-medium leading-[54px] tracking-[0.4px]">GAMES-Webinar</div>
      <div className="absolute left-[354px] top-[33px] flex h-[66px] items-end font-['Lato',sans-serif] font-black leading-none">
        {[0, 1].map((k) => (
          <div key={k} className="flex w-[69px] items-end">
            <span className="inline-block w-[35px] origin-bottom-left -rotate-[8deg] scale-x-[0.82] scale-y-[1.04] text-[80px] leading-[62px]">b</span>
            <span className="inline-block w-[10px] origin-bottom -rotate-[6deg] scale-x-[0.7] text-[46px] leading-[54px]">i</span>
            <span className="inline-block w-[12px] origin-bottom -rotate-[5deg] scale-x-[0.55] text-[66px] leading-[63px]">l</span>
            <span className="inline-block w-[10px] origin-bottom -rotate-[2deg] scale-x-[0.7] text-[46px] leading-[54px]">i</span>
          </div>
        ))}
      </div>
    </div>
  );
}
